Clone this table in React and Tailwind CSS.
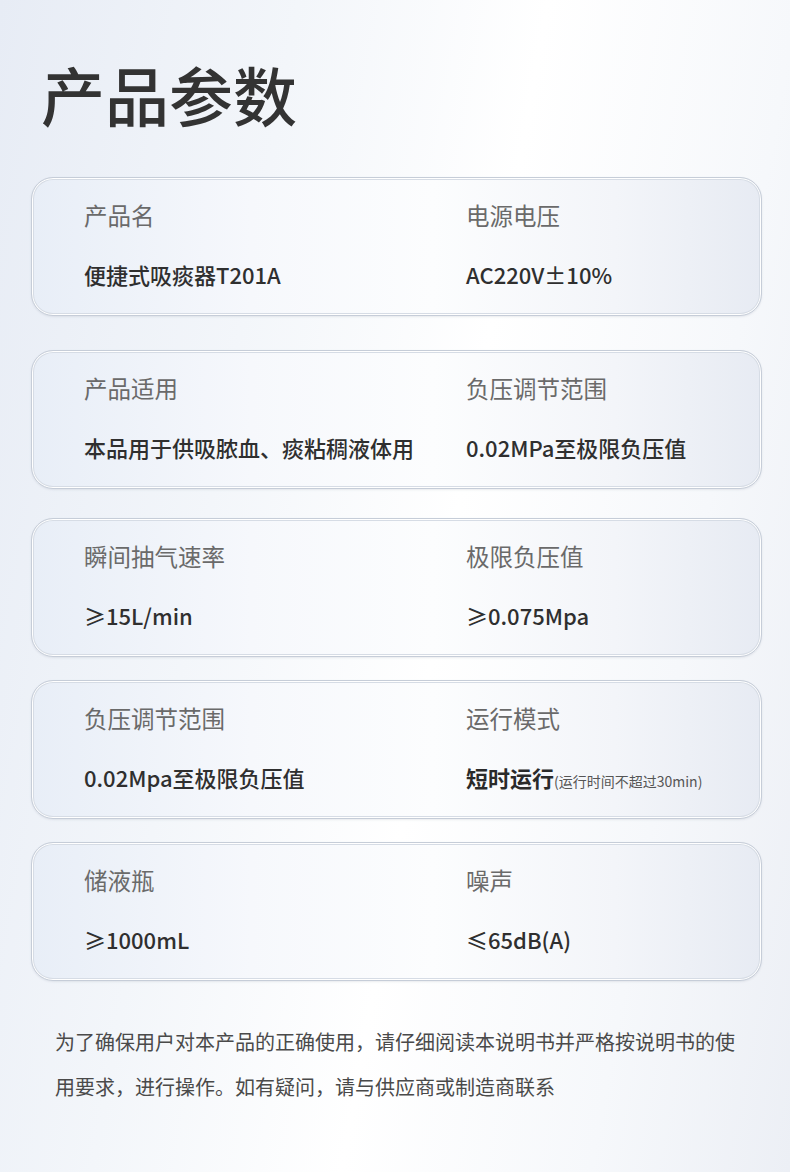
import React from "react";

const rows = [
  { mt: "mt-[52px]", a: ["产品名", "便捷式吸痰器T201A"], b: ["电源电压", "AC220V±10%"] },
  { mt: "mt-[34px]", a: ["产品适用", "本品用于供吸脓血、痰粘稠液体用"], b: ["负压调节范围", "0.02MPa至极限负压值"] },
  { mt: "mt-[29px]", a: ["瞬间抽气速率", "≥15L/min"], b: ["极限负压值", "≥0.075Mpa"] },
  { mt: "mt-[23px]", a: ["负压调节范围", "0.02Mpa至极限负压值"], b: ["运行模式", null] },
  { mt: "mt-[23px]", a: ["储液瓶", "≥1000mL"], b: ["噪声", "≤65dB(A)"] },
];

const font = { fontFamily: '"Noto Sans CJK SC", "Noto Sans", sans-serif' };

function Cell({ label, value, wide }) {
  return (
    <div className={wide ? "w-[382px] shrink-0" : "flex-1"}>
      <div className="text-[23.5px] leading-[32px] text-[#6a6a6a]">{label}</div>
      <div className="mt-[27px] text-[22px] leading-[32px] font-medium text-[#2f2f2f] whitespace-nowrap">
        {value === null ? (
          <span>
            <span className="text-[22px] font-bold text-[#2a2a2a]">短时运行</span>
            <span className="text-[14px] font-normal text-[#555]">(运行时间不超过30min)</span>
          </span>
        ) : (
          value
        )}
      </div>
    </div>
  );
}

export default function App() {
  return (
    <div
      style={font}
      className="w-[790px] h-[1172px] overflow-hidden bg-[linear-gradient(100deg,#e7ecf5_0%,#f3f6fa_30%,#ffffff_55%,#f6f8fb_80%,#eceff5_100%)]"
    >
      <div className="pt-[61px] pl-[41px] text-[64px] leading-[64px] font-medium text-[#333333]">
        产品参数
      </div>
      <div className="pl-[31px] w-[762px]">
        {rows.map((r, i) => (
          <div
            key={i}
            className={`${r.mt} h-[139px] rounded-[22px] border border-[#c6cdd8] bg-[linear-gradient(90deg,#e8eef7_0%,#f6f8fc_30%,#fcfdfe_55%,#f3f5f9_80%,#e7ebf3_100%)] shadow-[inset_0_0_0_1px_#ffffff,inset_0_0_0_2px_#d6dce5,0_1px_2px_rgba(120,130,150,0.15)] pt-[21px] pl-[52px] flex`}
          >
            <Cell label={r.a[0]} value={r.a[1]} wide />
            <Cell label={r.b[0]} value={r.b[1]} />
          </div>
        ))}
      </div>
      <div className="mt-[38px] pl-[55px] pr-[40px] text-[20px] leading-[45px] text-[#4a4a4a]">
        为了确保用户对本产品的正确使用，请仔细阅读本说明书并严格按说明书的使用要求，进行操作。如有疑问，请与供应商或制造商联系
      </div>
    </div>
  );
}
